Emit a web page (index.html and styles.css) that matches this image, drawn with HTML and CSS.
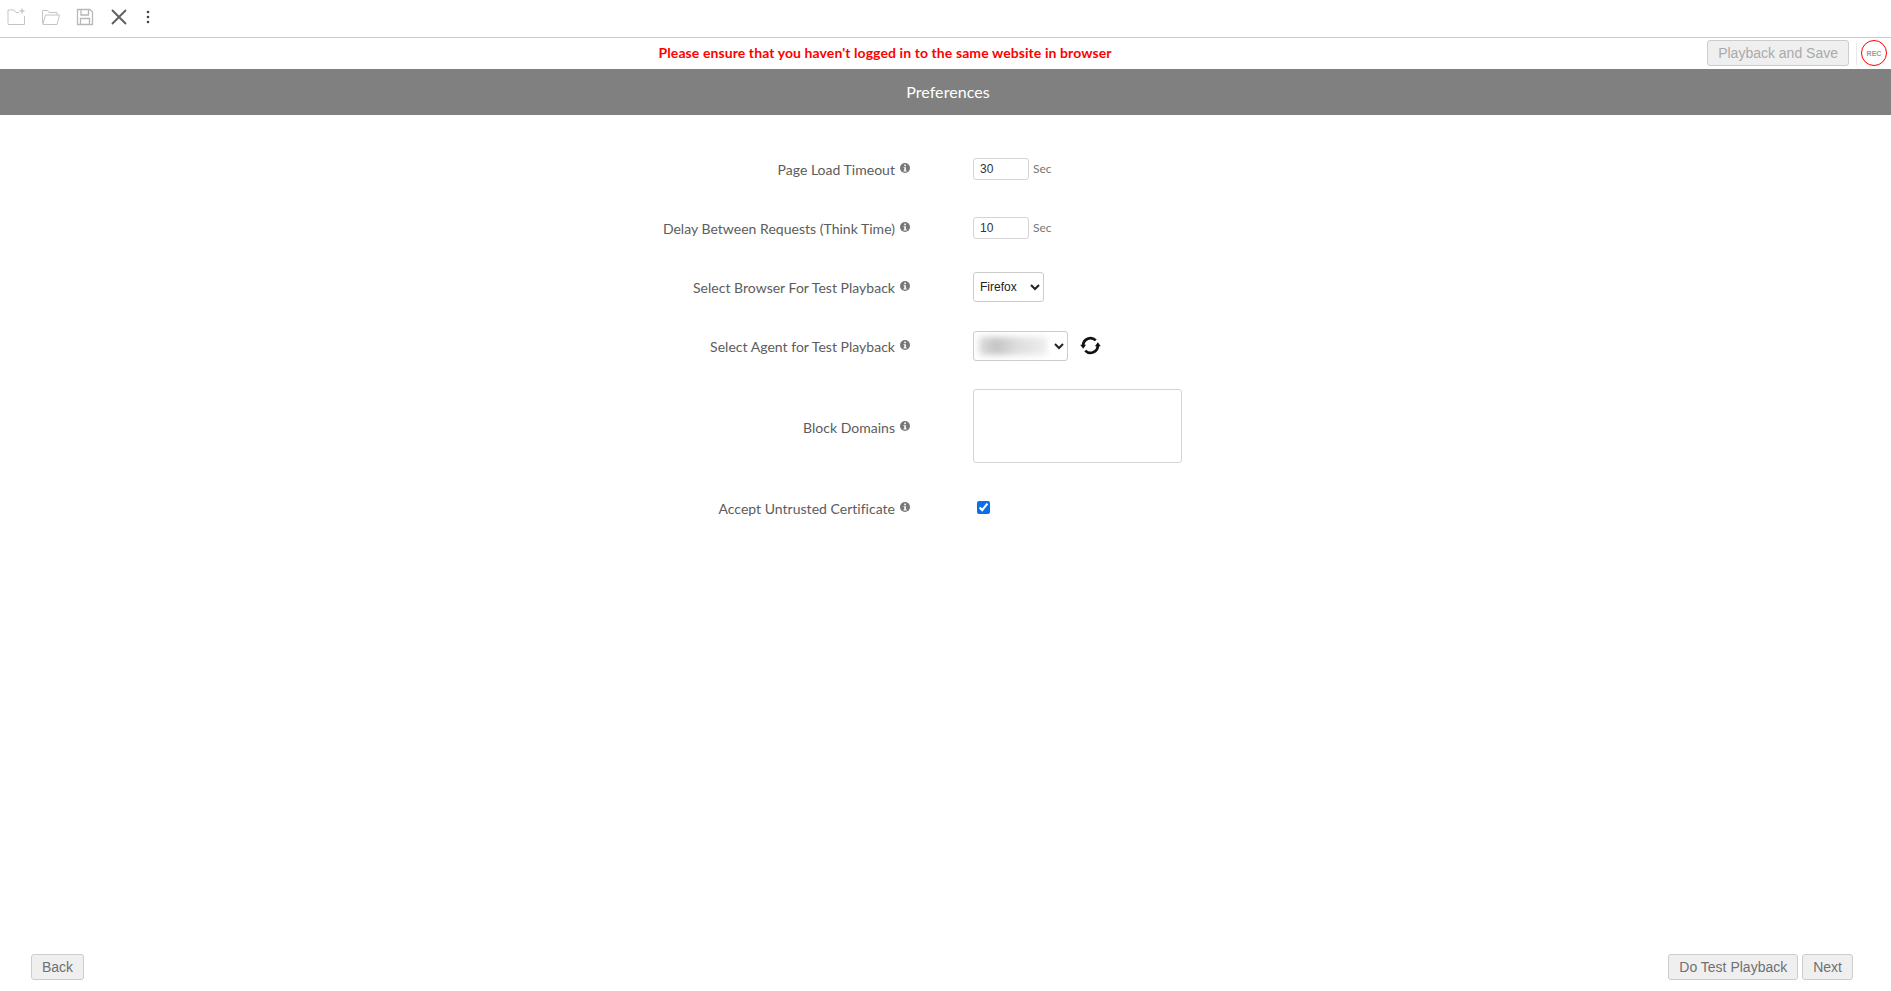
FILE: index.html
```html
<!DOCTYPE html>
<html lang="en">
<head>
<meta charset="utf-8">
<title>Preferences</title>
<link rel="stylesheet" href="styles.css">
</head>
<body>
<div class="page">
  <div class="toolbar">
    <svg class="tool" viewBox="0 0 20 20"><path d="M1 16.500V3h6l2 2.500h3M17.500 9v8.500H1" fill="none" stroke="#c4c4c4" stroke-width="1"/><path d="M15 1.500v5M12.500 4h5" stroke="#b5b5b5" stroke-width="1"/></svg>
    <svg class="tool" viewBox="0 0 20 20"><path d="M1.500 16.500V3.500h5l1.500 2h8v2.500" fill="none" stroke="#c4c4c4"/><path d="M2 17l2.500-9H18.500l-2.500 9.500H2z" fill="none" stroke="#c4c4c4"/></svg>
    <svg class="tool" viewBox="0 0 20 20"><path d="M2.500 2.500h12.500l2.500 2.500v12.500H2.500z" fill="none" stroke="#b8b8b8" stroke-width="1.300"/><path d="M6 3v5h7.500V3M5.500 17.500v-6h9v6" fill="none" stroke="#b8b8b8" stroke-width="1.300"/></svg>
    <svg class="tool" viewBox="0 0 20 20"><path d="M3 3l14 14M17 3L3 17" stroke="#5f5f5f" stroke-width="1.900"/></svg>
    <svg class="tool-more" viewBox="0 0 4 14"><circle cx="2" cy="2" r="1.300" fill="#444"/><circle cx="2" cy="7" r="1.300" fill="#444"/><circle cx="2" cy="12" r="1.300" fill="#444"/></svg>
  </div>
  <div class="notice">
    <p class="notice-text">Please ensure that you haven't logged in to the same website in browser</p>
    <button class="btn btn-disabled" type="button">Playback and Save</button>
    <span class="rec">REC</span>
  </div>
  <h1 class="title">Preferences</h1>
  <form class="form">
    <div class="row">
      <label class="label">Page Load Timeout<svg class="info" viewBox="0 0 10 10"><circle cx="5" cy="5" r="5" fill="#777"/><rect x="4.200" y="1.600" width="1.700" height="1.600" fill="#fff"/><path d="M3.500 4.200h2.400v3.400h.8v.9H3.500v-.9h.8V5.100h-.8z" fill="#fff"/></svg></label>
      <div class="field"><input class="num" type="text" value="30"><span class="unit">Sec</span></div>
    </div>
    <div class="row">
      <label class="label">Delay Between Requests (Think Time)<svg class="info" viewBox="0 0 10 10"><circle cx="5" cy="5" r="5" fill="#777"/><rect x="4.200" y="1.600" width="1.700" height="1.600" fill="#fff"/><path d="M3.500 4.200h2.400v3.400h.8v.9H3.500v-.9h.8V5.100h-.8z" fill="#fff"/></svg></label>
      <div class="field"><input class="num" type="text" value="10"><span class="unit">Sec</span></div>
    </div>
    <div class="row">
      <label class="label">Select Browser For Test Playback<svg class="info" viewBox="0 0 10 10"><circle cx="5" cy="5" r="5" fill="#777"/><rect x="4.200" y="1.600" width="1.700" height="1.600" fill="#fff"/><path d="M3.500 4.200h2.400v3.400h.8v.9H3.500v-.9h.8V5.100h-.8z" fill="#fff"/></svg></label>
      <div class="field"><select class="sel sel-browser"><option>Firefox</option></select></div>
    </div>
    <div class="row">
      <label class="label">Select Agent for Test Playback<svg class="info" viewBox="0 0 10 10"><circle cx="5" cy="5" r="5" fill="#777"/><rect x="4.200" y="1.600" width="1.700" height="1.600" fill="#fff"/><path d="M3.500 4.200h2.400v3.400h.8v.9H3.500v-.9h.8V5.100h-.8z" fill="#fff"/></svg></label>
      <div class="field">
        <div class="agent"><select class="sel sel-agent"><option></option></select><span class="blur"></span></div>
        <svg class="refresh" viewBox="0 0 20 20"><path d="M3 10A7 7 0 0 1 15 5.100M17 10A7 7 0 0 1 5 14.900" fill="none" stroke="#111" stroke-width="2.600"/><path d="M0.200 9.300h5.600L3 13.200zM14.200 10.700h5.600L17 6.800z" fill="#111"/></svg>
      </div>
    </div>
    <div class="row row-tall">
      <label class="label label-low">Block Domains<svg class="info" viewBox="0 0 10 10"><circle cx="5" cy="5" r="5" fill="#777"/><rect x="4.200" y="1.600" width="1.700" height="1.600" fill="#fff"/><path d="M3.500 4.200h2.400v3.400h.8v.9H3.500v-.9h.8V5.100h-.8z" fill="#fff"/></svg></label>
      <div class="field"><textarea class="area"></textarea></div>
    </div>
    <div class="row row-check">
      <label class="label">Accept Untrusted Certificate<svg class="info" viewBox="0 0 10 10"><circle cx="5" cy="5" r="5" fill="#777"/><rect x="4.200" y="1.600" width="1.700" height="1.600" fill="#fff"/><path d="M3.500 4.200h2.400v3.400h.8v.9H3.500v-.9h.8V5.100h-.8z" fill="#fff"/></svg></label>
      <div class="field"><input class="check" type="checkbox" checked></div>
    </div>
  </form>
  <div class="footer">
    <button class="btn" type="button">Back</button>
    <div class="footer-right">
      <button class="btn" type="button">Do Test Playback</button>
      <button class="btn" type="button">Next</button>
    </div>
  </div>
</div>
</body>
</html>
```
FILE: styles.css
```css
* { box-sizing: border-box; }
html, body { margin: 0; height: 100%; background: #fff; overflow: hidden; }
body { font-family: "Lato", "Liberation Sans", sans-serif; color: #555; }
.page { display: flex; flex-direction: column; height: 991px; }

.toolbar { display: flex; align-items: center; gap: 14px; height: 38px; padding: 0 7px 3px; border-bottom: 1px solid #ccc; flex: none; }
.tool { width: 20px; height: 20px; flex: none; }
.tool-more { width: 4px; height: 14px; margin-left: 3px; flex: none; }

.notice { display: flex; align-items: center; height: 31px; padding: 0 4px 1px 0; flex: none; }
.notice-text { flex: 1; margin: -1px 0 0; padding-left: 63px; text-align: center; font-size: 14px; font-weight: 700; letter-spacing: 0.09px; color: #f00; }
.rec { display: flex; align-items: center; justify-content: center; width: 26px; height: 26px; margin-left: 12px; border: 1px solid #f00; border-radius: 50%; font: 700 7px "Liberation Sans", sans-serif; color: #999; position: relative; }
.rec::before { content: ""; position: absolute; left: -6px; top: 2px; height: 22px; width: 1px; background: #e8e8e8; }

.title { flex: none; height: 46px; margin: 0; background: #808080; color: #fff; font-size: 16px; font-weight: 400; line-height: 45px; text-align: center; padding-left: 5px; letter-spacing: 0.08px; }

.form { padding-top: 24px; flex: none; }
.row { display: grid; grid-template-columns: 910px 1fr; column-gap: 63px; align-items: center; min-height: 59px; }
.row-tall { min-height: 102px; }
.row-check { padding-top: 2px; }
.label { display: flex; justify-content: flex-end; align-items: center; font-size: 14px; letter-spacing: 0.02px; color: #5c5c5c; padding-top: 1px; }
.label-low { padding-top: 2px; }
.info { width: 10px; height: 10px; margin: -2px 0 0 5px; flex: none; }
.field { display: flex; align-items: center; }

.num { width: 56px; height: 22px; padding: 0 6px; border: 1px solid #d4d4d4; border-radius: 3px; font: 12px "Liberation Sans", sans-serif; color: #333; background: #fff; }
.unit { margin-left: 4px; font-size: 12px; color: #777; }
.sel { height: 30px; border: 1px solid #ccc; border-radius: 3px; background: #fff; padding: 0 2px; font: 12px "Liberation Sans", sans-serif; color: #222; }
.sel-browser { width: 71px; }
.sel-agent { width: 95px; display: block; }
.agent { position: relative; }
.blur { position: absolute; left: 6px; top: 6px; width: 68px; height: 18px; background: linear-gradient(90deg, #ddd, #c4c4c4 25%, #ddd 55%, #eee); filter: blur(3px); }
.refresh { width: 21px; height: 21px; margin-left: 12px; }
.area { display: block; width: 209px; height: 74px; border: 1px solid #d4d4d4; border-radius: 3px; resize: none; background: #fff; }
.check { width: 13px; height: 13px; margin: 0 0 0 4px; accent-color: #0b6fe8; }

.footer { margin-top: auto; display: flex; justify-content: space-between; padding: 0 38px 11px 31px; }
.footer-right { display: flex; gap: 4px; }
.btn { height: 26px; padding: 0 10px; border: 1px solid #ccc; border-radius: 3px; background: #efefef; color: #707070; font: 14px "Liberation Sans", sans-serif; white-space: nowrap; }
.btn-disabled { color: #aaa; }
```
